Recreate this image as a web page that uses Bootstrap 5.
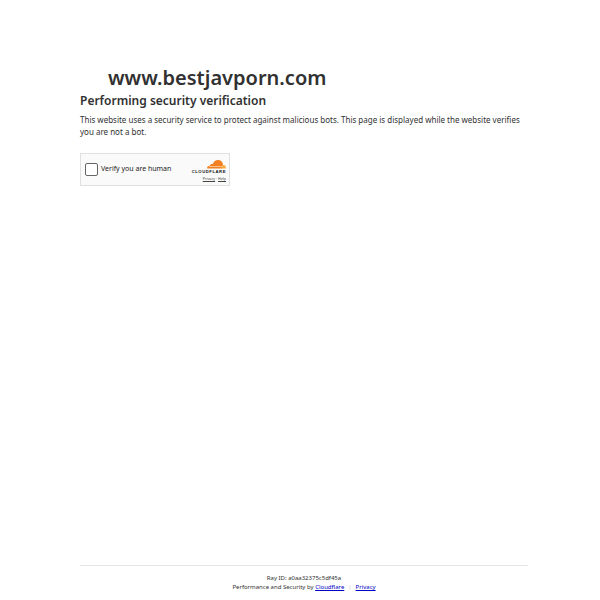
<!DOCTYPE html>
<html lang="en">
<head>
<meta charset="utf-8">
<title>Just a moment...</title>
<link href="https://cdn.jsdelivr.net/npm/bootstrap@5.3.0/dist/css/bootstrap.min.css" rel="stylesheet">
<style>
html,body{height:100%;margin:0}
body{font-family:"Noto Sans",sans-serif;color:#313131;background:#fff}
.pg{height:600px;padding:65px 72px 0 80px}
.site{font-size:20px;line-height:25px;font-weight:600;margin:0 0 0 28px;color:#313131}
.head2{font-size:12px;line-height:15px;font-weight:600;margin:3px 0 6px;color:#313131}
.info{font-size:8px;line-height:12px;margin:0;color:#313131}
.widget{width:150px;height:33px;margin-top:15px;background:#fafafa;border:1px solid #e0e0e0;padding:0 3px 0 4px}
.box{width:13px;height:13px;border:1.5px solid #666;border-radius:2px;background:#fff}
.vtext{font-size:7px;margin-left:3px;color:#232323}
.brand{width:40px;margin-top:1px}
.cfname{font-family:"Liberation Sans",sans-serif;font-size:4.2px;font-weight:700;letter-spacing:.55px;line-height:5px;color:#111}
.cflinks{font-size:3.7px;line-height:6px;color:#444;margin-top:2px;white-space:nowrap}
.cflinks a{color:#444}
.foot{border-top:1px solid #e5e5e5;height:35px;padding-top:8px;text-align:center;font-size:6px;line-height:9px;color:#313131}
.foot a{color:#0000c8}
.sep{margin:0 4px;color:#c0c0c0}
.ray{font:inherit;color:inherit}
</style>
</head>
<body>
<div class="pg d-flex flex-column">
  <div class="flex-grow-1">
    <h1 class="site">www.bestjavporn.com</h1>
    <h2 class="head2">Performing security verification</h2>
    <p class="info">This website uses a security service to protect against malicious bots. This page is displayed while the website verifies you are not a bot.</p>
    <div class="widget d-flex align-items-center justify-content-between">
      <div class="d-flex align-items-center">
        <span class="box"></span>
        <span class="vtext">Verify you are human</span>
      </div>
      <div class="brand d-flex flex-column align-items-end">
        <svg width="20" height="10" viewBox="0 0 20 10" aria-hidden="true">
          <path fill="#f38020" d="M1 9.500c0-1.600 1.200-2.700 2.700-2.700.4-1.300 1.600-2 2.900-1.700C7.600 2.600 9.600 1 12 1c2.700 0 4.800 2 5 4.600l-1 3.900H1z"/>
          <path fill="#faae40" d="M15.200 9.500c.6-2 1.400-3.400 2.600-3.400 1.300 0 2.200 1.500 2.200 3.400h-4.800z"/>
          <path fill="#fff" d="M3 7.200h12.800v.5H3z"/>
        </svg>
        <div class="cfname">CLOUDFLARE</div>
        <div class="cflinks"><a href="#">Privacy</a> · <a href="#">Help</a></div>
      </div>
    </div>
  </div>
  <footer class="foot">
    <div>Ray ID: <span class="ray">a0aa32375c5df45a</span></div>
    <div>Performance and Security by <a href="#">Cloudflare</a><span class="sep">|</span><a href="#">Privacy</a></div>
  </footer>
</div>
</body>
</html>
